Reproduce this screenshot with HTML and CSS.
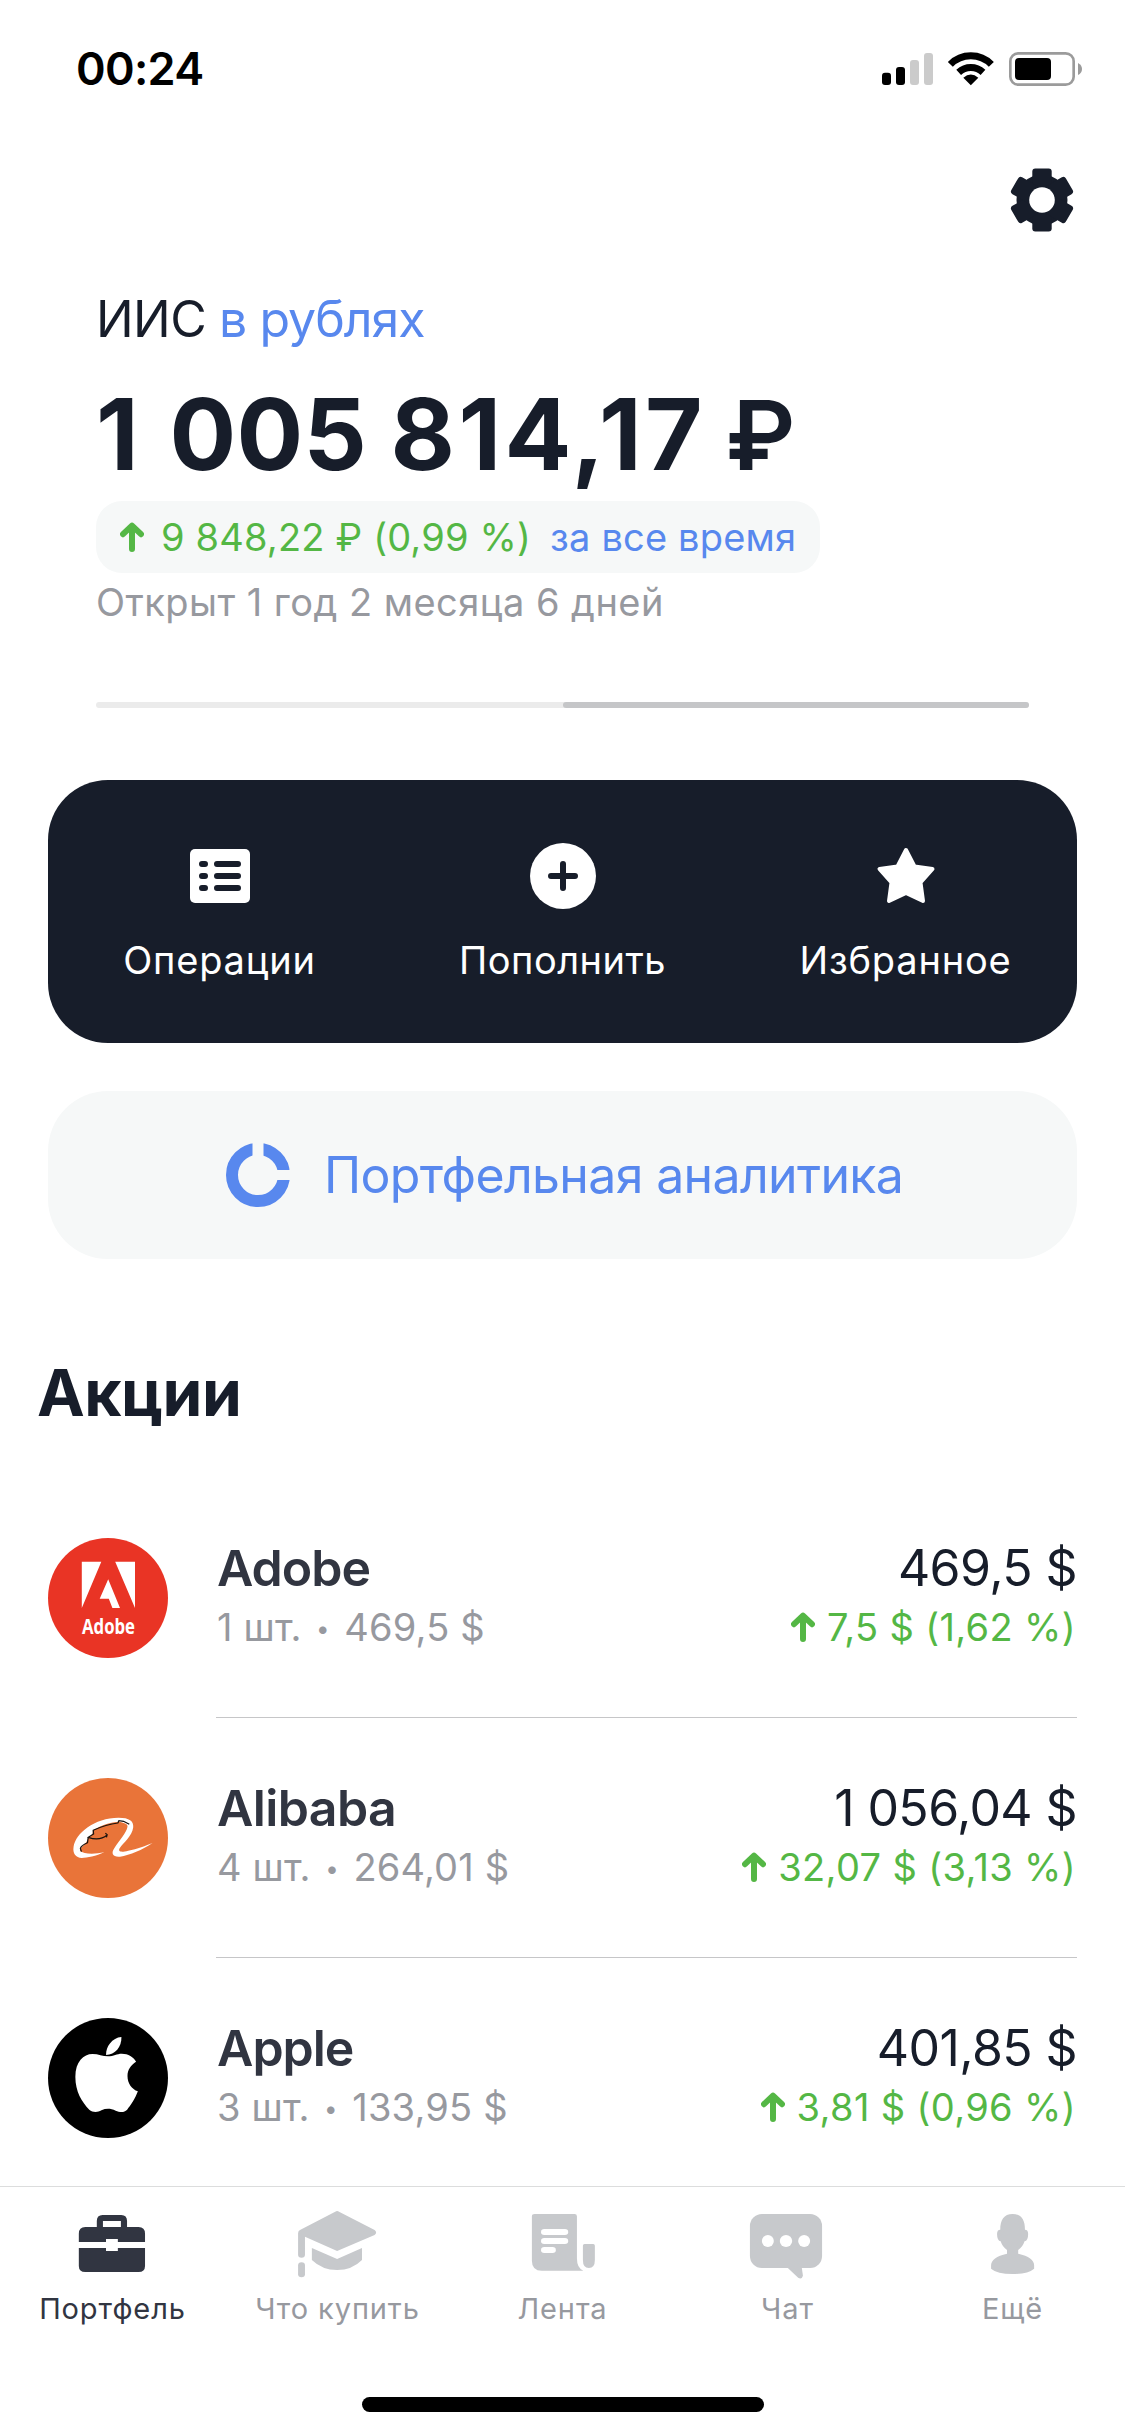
FILE: index.html
```html
<!DOCTYPE html>
<html lang="ru">
<head>
<meta charset="utf-8">
<title>Портфель</title>
<link rel="stylesheet" href="styles.css">
</head>
<body>
<svg class="defs" width="0" height="0" aria-hidden="true">
  <symbol id="arrow" viewBox="0 0 24 30"><path d="M12 27V4M3 12.2 12 3.6l9 8.6" fill="none" stroke="currentColor" stroke-width="6" stroke-linecap="round" stroke-linejoin="round"/></symbol>
</svg>
<main class="screen">
  <header class="status">
    <span class="time">00:24</span>
    <svg width="202" height="36" viewBox="0 0 606 108">
      <g transform="translate(-33 -33)">
        <rect x="36" y="98" width="27" height="37" rx="9"/>
        <rect x="78" y="81" width="27" height="54" rx="9"/>
        <rect x="120" y="60" width="27" height="75" rx="9" fill="#cbcbcb"/>
        <rect x="162" y="39" width="27" height="96" rx="9" fill="#cbcbcb"/>
        <path d="M241 73A86 86 0 0 1 364 73M266 97A54 54 0 0 1 339 97" fill="none" stroke="#000" stroke-width="21"/>
        <path d="M302.500 136 280 113Q302.500 94 325 113Z"/>
        <rect x="421" y="40" width="190" height="94" rx="24" fill="none" stroke="#9b9b9b" stroke-width="8"/>
        <rect x="435" y="54" width="108" height="66" rx="12"/>
        <path d="M624 69Q636 75 636 87Q636 99 624 105Z" fill="#9b9b9b"/>
      </g>
    </svg>
  </header>

  <div class="toolbar">
    <svg width="64" height="64" viewBox="-32 -32 64 64" fill="#171d2a">
      <circle r="25.500"/>
      <rect x="-9.700" y="-31.500" width="19.400" height="63" rx="3"/>
      <rect x="-9.700" y="-31.500" width="19.400" height="63" rx="3" transform="rotate(60)"/>
      <rect x="-9.700" y="-31.500" width="19.400" height="63" rx="3" transform="rotate(120)"/>
      <circle r="12.800" fill="#fff"/>
    </svg>
  </div>

  <section class="account">
    <div class="kind"><span>ИИС</span><span class="currency">в рублях</span></div>
    <div class="amount">1<span class="group"> 005 </span><span class="tail">814,17</span><span class="rub"> ₽</span></div>
    <div class="profit">
      <svg class="arrow" width="24" height="30"><use href="#arrow"/></svg>
      <span class="gain">9 848,22 ₽ (0,99 %)</span>
      <span class="period">за все время</span>
    </div>
    <div class="opened">Открыт 1 год 2 месяца 6 дней</div>
    <div class="pager"><i></i><i class="on"></i></div>
  </section>

  <nav class="actions">
    <div class="action">
      <svg width="66" height="66" viewBox="-33 -33 66 66">
        <rect x="-30" y="-27" width="60" height="54" rx="5" fill="#fff"/>
        <path d="M-18-12h3M-18 0h3M-18 12h3M-3-12h21M-3 0h21M-3 12h21" stroke="#171d2a" stroke-width="6" stroke-linecap="round"/>
      </svg>
      <span>Операции</span>
    </div>
    <div class="action">
      <svg width="66" height="66" viewBox="-33 -33 66 66">
        <circle r="33" fill="#fff"/>
        <path d="M-12 0h24M0-12v24" stroke="#171d2a" stroke-width="6" stroke-linecap="round"/>
      </svg>
      <span class="topup">Пополнить</span>
    </div>
    <div class="action">
      <svg width="66" height="66" viewBox="-33 -33 66 66">
        <path d="M0-26 8.500-9.500 26.500-7 14.500 6.500 17 25 0 17-17 25-14.500 6.500-26.500-7-8.500-9.500Z" fill="#fff" stroke="#fff" stroke-width="4" stroke-linejoin="round"/>
      </svg>
      <span>Избранное</span>
    </div>
  </nav>

  <div class="analytics">
    <svg width="64" height="64" viewBox="-32 -32 64 64">
      <circle r="26" fill="none" stroke="#5888ee" stroke-width="12"/>
      <path d="M-5.500-33h11v18h-11zM15-5h18V5H15z" fill="#f6f8f8"/>
    </svg>
    <span>Портфельная аналитика</span>
  </div>

  <h2 class="heading">Акции</h2>

  <ul class="stocks">
    <li class="stock">
      <svg class="logo" viewBox="0 0 120 120">
        <circle cx="60" cy="60" r="60" fill="#e93425"/>
        <path d="M33.800 23.700H53.300L33.800 70ZM67.200 23.700H87V70ZM60.200 41.300 72 70h-7.600L60.800 60.700h-9.100Z" fill="#fff"/>
        <text class="logo-name" x="34" y="96.300" textLength="53" lengthAdjust="spacingAndGlyphs">Adobe</text>
      </svg>
      <div class="info">
        <div class="left"><div class="name">Adobe</div><div class="sub">1 шт. <span class="dot">•</span> 469,5 $</div></div>
        <div class="right"><div class="value">469,5 $</div><div class="change"><svg width="24" height="30"><use href="#arrow"/></svg><span>7,5 $ (1,62 %)</span></div></div>
      </div>
    </li>
    <li class="stock">
      <svg class="logo" viewBox="0 0 120 120">
        <circle cx="60" cy="60" r="60" fill="#e97439"/>
        <g transform="translate(-18 -258) scale(.35714 .33333)">
          <path d="M208 997C185 1008 160 1014 145 1014C128 1013 119 1000 122 980C128 940 180 893 248 893C278 893 291 903 289 922C286 948 262 968 251 985C245 997 258 997 275 992C300 987 325 977 343 969C315 990 280 1005 252 1010C232 1012 226 1000 236 985C248 962 270 940 273 920C274 910 262 908 248 905C215 908 190 921 176 932Q177 945 163 952C162 970 142 978 140 992C150 1003 180 1003 208 997Z" fill="#fff"/>
          <path d="M278 913 262 904 249 902 246 909C220 912 195 922 177 931L178 942 163 952Q195 964 216 945M211 940 216 944 214 952M163 952 161 968Q143 976 141 985L144 995" fill="none" stroke="#17120e" stroke-width="3.500"/>
        </g>
      </svg>
      <div class="info">
        <div class="left"><div class="name ali">Alibaba</div><div class="sub">4 шт. <span class="dot">•</span> 264,01 $</div></div>
        <div class="right"><div class="value">1 056,04 $</div><div class="change"><svg width="24" height="30"><use href="#arrow"/></svg><span>32,07 $ (3,13 %)</span></div></div>
      </div>
    </li>
    <li class="stock">
      <svg class="logo" viewBox="0 0 120 120">
        <circle cx="60" cy="60" r="60"/>
        <g transform="translate(-18 -98) scale(.35714 .33333)" fill="#fff">
          <path d="M218 409C235 409 243 401 257 401C275 401 290 411 297 425C283 435 273 448 273 468C273 490 285 508 302 514C295 535 282 556 272 569C262 580 250 576 240 572C225 565 213 565 200 571C188 578 175 577 166 569C145 545 127 515 127 470C127 425 150 402 175 402C192 402 203 409 218 409Z"/>
          <path d="M213 405C212 380 230 353 256 351C257 380 238 405 213 405Z"/>
        </g>
      </svg>
      <div class="info">
        <div class="left"><div class="name">Apple</div><div class="sub">3 шт. <span class="dot">•</span> 133,95 $</div></div>
        <div class="right"><div class="value">401,85 $</div><div class="change"><svg width="24" height="30"><use href="#arrow"/></svg><span>3,81 $ (0,96 %)</span></div></div>
      </div>
    </li>
  </ul>
</main>

<footer class="tabbar">
  <nav class="tabs">
    <div class="tab active">
      <svg width="225" height="80" viewBox="0 0 225 80"><g transform="translate(0 -20) scale(.38265 .33333)">
        <path fill-rule="evenodd" d="M253 141V123Q253 105 268 105H317Q332 105 332 123V141H362Q379 141 379 161V186H308V177H277V186H206V161Q206 141 223 141ZM269 141H316V123H269ZM206 204H277V213H308V204H379V258Q379 276 362 276H223Q206 276 206 258Z"/>
      </g></svg>
      <span>Портфель</span>
    </div>
    <div class="tab">
      <svg width="225" height="80" viewBox="0 0 225 80"><g transform="translate(-225 -20) scale(.38265 .33333)">
        <path d="M876 95Q881 91 886 95L979 150Q987 157 979 165L881 213 797 170V224Q797 233 788 233T779 224V160Q779 153 784 150ZM815 204 881 237 946 204V240Q920 270 881 270T815 240Z"/>
        <rect x="779" y="247" width="18" height="45" rx="9"/>
      </g></svg>
      <span>Что купить</span>
    </div>
    <div class="tab">
      <svg width="225" height="80" viewBox="0 0 225 80"><g transform="translate(50 -20) scale(.3986 .33333)">
        <path d="M87 102H187Q193 102 193 109V235Q193 265 209 272H105Q80 272 80 242V109Q80 102 87 102ZM212 192H234Q238 192 238 197V240Q238 264 223 264T208 240V197Q208 192 212 192Z"/>
        <g fill="#fff"><rect x="103" y="147" width="68" height="18" rx="8"/><rect x="103" y="174" width="68" height="18" rx="8"/><rect x="103" y="201" width="37" height="18" rx="8"/></g>
      </g></svg>
      <span>Лента</span>
    </div>
    <div class="tab">
      <svg width="225" height="80" viewBox="0 0 225 80"><g transform="translate(-175 -20) scale(.3986 .33333)">
        <rect x="627" y="102" width="181" height="162" rx="30" ry="36"/>
        <path d="M720 262 748 293Q757 300 760 287L757 262Z"/>
        <g fill="#fff"><ellipse cx="672" cy="183" rx="15" ry="18"/><ellipse cx="717.500" cy="183" rx="15.500" ry="18"/><ellipse cx="763" cy="183" rx="15" ry="18"/></g>
      </g></svg>
      <span>Чат</span>
    </div>
    <div class="tab">
      <svg width="225" height="80" viewBox="0 0 225 80"><g transform="translate(-400 -20) scale(.3986 .33333)">
        <path d="M1286 102C1308 102 1317 120 1317 149Q1325 149 1325 162Q1325 182 1316 184Q1311 202 1300 210V221Q1340 232 1340 256V266Q1325 282 1286 282T1232 266V256Q1232 232 1272 221V210Q1261 202 1256 184Q1247 182 1247 162Q1247 149 1255 149C1255 120 1264 102 1286 102Z"/>
      </g></svg>
      <span>Ещё</span>
    </div>
  </nav>
  <div class="home"></div>
</footer>
</body>
</html>
```
FILE: styles.css
```css
* { box-sizing: border-box; }

body {
  margin: 0;
  width: 1125px;
  height: 2436px;
  display: flex;
  flex-direction: column;
  overflow: hidden;
  background: #fff;
  color: #171d2a;
  font-family: "Inter", "Liberation Sans", sans-serif;
  white-space: nowrap;
}

svg { display: block; flex: none; }
.defs { width: 0; height: 0; }

.screen { height: 2186px; flex: none; overflow: hidden; }

/* Status bar */
.status {
  height: 138px;
  padding: 0 42px 0 76px;
  display: flex;
  align-items: center;
  justify-content: space-between;
  color: #000;
}
.time { font-size: 45px; line-height: 60px; font-weight: 600; letter-spacing: -.7px; }

.toolbar { height: 123px; padding: 0 51px; display: flex; align-items: center; justify-content: flex-end; }

/* Account summary */
.account { padding: 28px 96px 0; }
.kind { display: flex; gap: 13px; font-size: 50px; line-height: 60px; letter-spacing: -.6px; }
.currency { color: #5888ee; letter-spacing: -1px; }
.amount { height: 110px; margin-top: 30px; font-size: 99px; line-height: 110px; font-weight: 700; letter-spacing: .2px; }
.group { margin-left: 7px; }
.tail { letter-spacing: 3.4px; }
.rub { font-size: 96px; line-height: 1; font-weight: 600; word-spacing: -5px; }
.profit {
  width: 724px;
  height: 72px;
  margin-top: 12px;
  padding-left: 24px;
  display: flex;
  align-items: center;
  border-radius: 26px;
  background: #f6f8f8;
  font-size: 38px;
  letter-spacing: .17px;
}
.arrow { color: #54b745; }
.gain { margin-left: 17px; color: #54b745; }
.period { margin-left: 19px; color: #5888ee; }
.opened { font-size: 38px; line-height: 58px; letter-spacing: .46px; color: #97999f; }
.pager { display: flex; margin-top: 71px; height: 6px; border-radius: 3px; background: #ebebeb; }
.pager i { flex: 1; border-radius: 3px; }
.pager .on { background: #c5c6c8; }

/* Quick actions */
.actions {
  height: 263px;
  margin: 72px 48px 0;
  padding-top: 63px;
  display: flex;
  border-radius: 60px;
  background: #171d2a;
  color: #fff;
}
.action { flex: 1; display: flex; flex-direction: column; align-items: center; gap: 21px; font-size: 38px; line-height: 60px; letter-spacing: .8px; }
.topup { letter-spacing: .5px; }

.analytics {
  height: 168px;
  margin: 48px 48px 0;
  padding-left: 178px;
  display: flex;
  align-items: center;
  gap: 34px;
  border-radius: 60px;
  background: #f6f8f8;
  color: #5888ee;
  font-size: 50px;
  letter-spacing: -.65px;
}

.heading { margin: 94px 37px 0; font-size: 64px; line-height: 80px; font-weight: 700; letter-spacing: -.5px; }

/* Holdings */
.stocks { list-style: none; margin: 45px 0 0; padding: 0 48px; }
.stock { display: flex; align-items: center; gap: 48px; height: 240px; }
.logo { width: 120px; height: 120px; }
.logo-name { font: 700 22px "Open Sans", "Noto Sans", sans-serif; fill: #fff; }
.info {
  flex: 1;
  height: 240px;
  padding-left: 1px;
  display: flex;
  align-items: center;
  justify-content: space-between;
  border-bottom: 1px solid #c6c6c8;
}
.name { font-size: 50px; line-height: 59px; font-weight: 600; letter-spacing: -1px; color: #313541; }
.ali { letter-spacing: -.6px; }
.sub { height: 59px; font-size: 38px; line-height: 59px; letter-spacing: .18px; color: #97999f; }
.dot { display: inline-block; width: 21px; font-size: 24px; line-height: 24px; text-align: center; vertical-align: 4px; }
.right { display: flex; flex-direction: column; align-items: flex-end; }
.value { font-size: 50px; line-height: 59px; letter-spacing: -.6px; }
.change { display: flex; align-items: center; gap: 12px; padding-right: 1px; font-size: 38px; line-height: 59px; letter-spacing: .36px; color: #54b745; }

/* Bottom bar */
.tabbar { flex: 1; display: flex; flex-direction: column; align-items: center; border-top: 1px solid #dcdddd; padding-top: 13px; }
.tabs { display: flex; width: 1125px; }
.tab { width: 225px; display: flex; flex-direction: column; align-items: center; font-size: 29px; line-height: 57px; letter-spacing: .9px; color: #97999f; }
.tab svg { fill: #c7c9cc; }
.active { color: #313541; }
.active svg { fill: #313541; }
.home { width: 402px; height: 15px; margin-top: 60px; border-radius: 8px; background: #000; }
```
